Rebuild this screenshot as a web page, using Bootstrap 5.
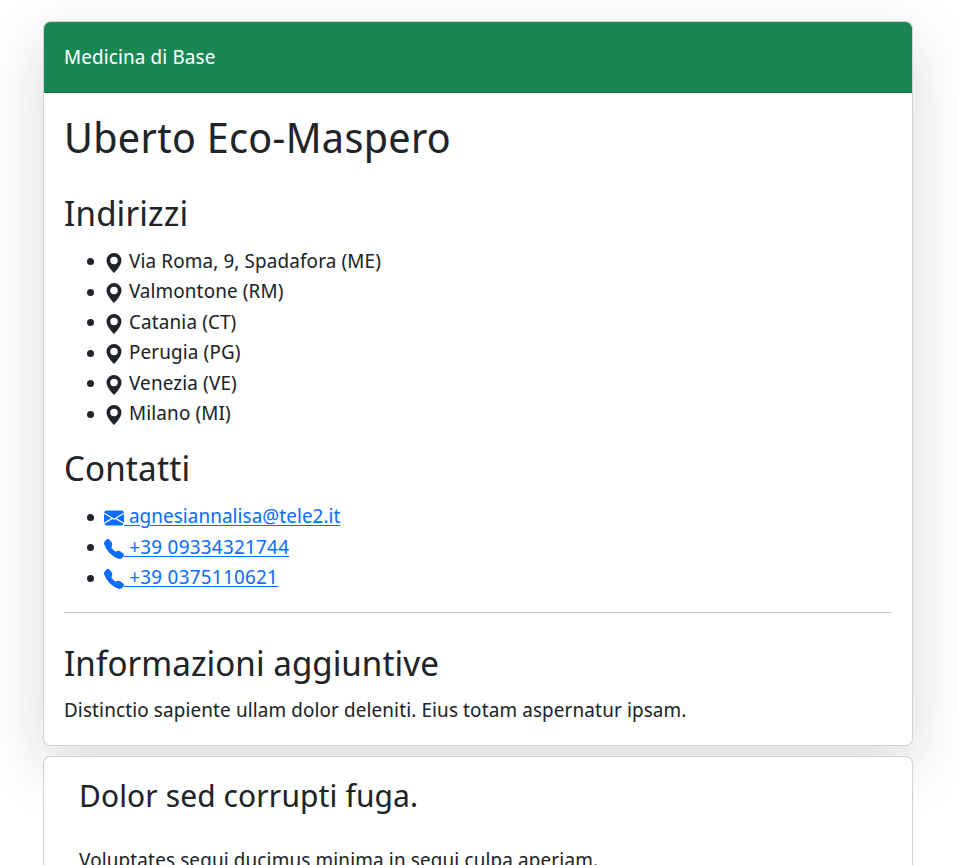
<!DOCTYPE html>
<html lang="it">
<head>
<meta charset="utf-8">
<meta name="viewport" content="width=device-width, initial-scale=1">
<title>Medicina di Base</title>
<link href="https://cdn.jsdelivr.net/npm/bootstrap@5.3.0/dist/css/bootstrap.min.css" rel="stylesheet">
<style>
html { font-size: 20px; }
body { font-family: "Noto Sans Display", "Noto Sans", sans-serif; letter-spacing: .0065em; overflow: hidden; height: 100vh; }
h1, h2, h3 { font-weight: 400; }
h1 { letter-spacing: .0086em; margin: -1px 0 11px; }
h2 { margin-bottom: .6rem; letter-spacing: .0015em; }
h3 { margin-top: -1px; }
hr { margin: .95rem 0 .9rem; }
.page { padding: 21px 45px 0 43px; }
.profile { padding-top: .9rem; }
.profile h2 { margin-bottom: .65rem; letter-spacing: .0045em; }
.profile ul { margin-bottom: .85rem; list-style: none; }
.profile h2:first-of-type { margin-bottom: .625rem; }
.profile ul:first-of-type { margin-bottom: .875rem; }
.profile li { line-height: 30.45px; }
.profile li::before { content: ""; display: inline-block; width: 7px; height: 7px; border-radius: 50%; background: currentColor; margin: 0 10.3px 0 -17.3px; vertical-align: 2.5px; }
.icon { width: 1em; height: 1em; fill: currentColor; vertical-align: -.25em; }
a { text-decoration-thickness: 1px; text-underline-offset: 2px; }
.email { letter-spacing: .003em; }
.tel { letter-spacing: .016em; }
.entry { padding: 1rem 1.75rem; }
.entry h3 { margin-bottom: 31px; }
.entry p { letter-spacing: .0076em; }
</style>
</head>
<body>
<svg class="d-none" xmlns="http://www.w3.org/2000/svg">
<symbol id="pin" viewBox="0 0 16 16"><path d="M8 16s6-5.686 6-10A6 6 0 0 0 2 6c0 4.314 6 10 6 10zm0-7a3 3 0 1 1 0-6 3 3 0 0 1 0 6z"/></symbol>
<symbol id="mail" viewBox="0 0 16 16"><path d="M.05 3.555A2 2 0 0 1 2 2h12a2 2 0 0 1 1.95 1.555L8 8.414.05 3.555ZM0 4.697v7.104l5.803-3.558L0 4.697ZM6.761 8.83l-6.57 4.027A2 2 0 0 0 2 14h12a2 2 0 0 0 1.808-1.144l-6.57-4.027L8 9.586l-1.239-.757Zm3.436-.586L16 11.801V4.697l-5.803 3.546Z"/></symbol>
<symbol id="phone" viewBox="0 0 16 16"><path fill-rule="evenodd" d="M1.885.511a1.745 1.745 0 0 1 2.61.163L6.29 2.98c.329.423.445.974.315 1.494l-.547 2.19a.678.678 0 0 0 .178.643l2.457 2.457a.678.678 0 0 0 .644.178l2.189-.547a1.745 1.745 0 0 1 1.494.315l2.306 1.794c.829.645.905 1.87.163 2.611l-1.034 1.034c-.74.74-1.846 1.065-2.877.702a18.634 18.634 0 0 1-7.01-4.42 18.634 18.634 0 0 1-4.42-7.009c-.362-1.03-.037-2.137.703-2.877L1.885.511z"/></symbol>
</svg>
<main class="page">
  <div class="card shadow-lg mb-2">
    <div class="card-header text-bg-success p-3">Medicina di Base</div>
    <div class="card-body">
      <h1>Uberto Eco-Maspero</h1>
      <section class="profile">
        <h2>Indirizzi</h2>
        <ul>
          <li><svg class="icon"><use href="#pin"/></svg> Via Roma, 9, Spadafora (ME)</li>
          <li><svg class="icon"><use href="#pin"/></svg> Valmontone (RM)</li>
          <li><svg class="icon"><use href="#pin"/></svg> Catania (CT)</li>
          <li><svg class="icon"><use href="#pin"/></svg> Perugia (PG)</li>
          <li><svg class="icon"><use href="#pin"/></svg> Venezia (VE)</li>
          <li><svg class="icon"><use href="#pin"/></svg> Milano (MI)</li>
        </ul>
        <h2>Contatti</h2>
        <ul>
          <li><a class="email" href="#"><svg class="icon"><use href="#mail"/></svg> agnesiannalisa@tele2.it</a></li>
          <li><a class="tel" href="#"><svg class="icon"><use href="#phone"/></svg> +39 09334321744</a></li>
          <li><a class="tel" href="#"><svg class="icon"><use href="#phone"/></svg> +39 0375110621</a></li>
        </ul>
      </section>
      <hr>
      <section class="pt-2">
        <h2>Informazioni aggiuntive</h2>
        <p class="mb-0">Distinctio sapiente ullam dolor deleniti. Eius totam aspernatur ipsam.</p>
      </section>
    </div>
  </div>
  <div class="card">
    <div class="entry">
      <h3>Dolor sed corrupti fuga.</h3>
      <p>Voluptates sequi ducimus minima in sequi culpa aperiam.</p>
    </div>
  </div>
</main>
<script src="https://cdn.jsdelivr.net/npm/bootstrap@5.3.0/dist/js/bootstrap.bundle.min.js"></script>
</body>
</html>
